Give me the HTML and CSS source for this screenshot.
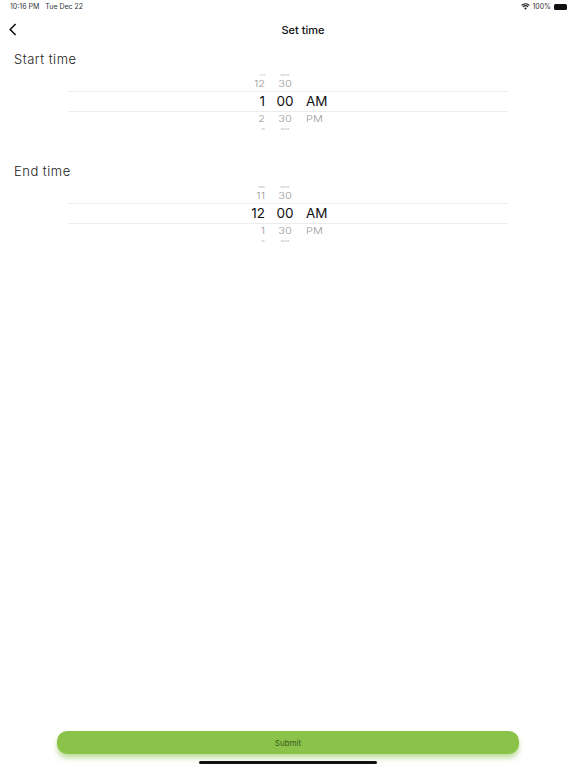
FILE: index.html
```html
<!DOCTYPE html>
<html lang="en">
<head>
<meta charset="utf-8">
<title>Set time</title>
<link rel="stylesheet" href="styles.css">
</head>
<body>
<div class="page">
  <div class="status">
    <div class="status-left"><span>10:16 PM</span><span>Tue Dec 22</span></div>
    <div class="status-right">
      <svg class="wifi" width="9" height="7" viewBox="0 0 10 8"><path d="M5 7.6 3.4 5.8a2.4 2.4 0 0 1 3.2 0zM2.5 4.9 1.6 3.9a5 5 0 0 1 6.8 0l-.9 1a3.7 3.7 0 0 0-5 0zM.9 3.2 0 2.2a7.4 7.4 0 0 1 10 0l-.9 1a6.1 6.1 0 0 0-8.2 0z" fill="#1a1a1a"/></svg>
      <span>100%</span>
      <span class="battery"></span>
    </div>
  </div>
  <header class="nav">
    <svg class="back" width="8" height="13" viewBox="0 0 8 13"><path d="M6.6 1 1.2 6.5l5.4 5.5" fill="none" stroke="#111" stroke-width="1.6"/></svg>
    <h1>Set time</h1>
  </header>
  <main class="content">
    <section class="block">
      <h2>Start time</h2>
      <div class="picker">
        <div class="row far top"><span>11</span><span>00</span><span></span></div>
        <div class="row near top"><span>12</span><span>30</span><span></span></div>
        <div class="row current"><span>1</span><span>00</span><span>AM</span></div>
        <div class="row near"><span>2</span><span>30</span><span>PM</span></div>
        <div class="row far"><span>3</span><span>00</span><span></span></div>
      </div>
    </section>
    <section class="block">
      <h2>End time</h2>
      <div class="picker">
        <div class="row far top"><span>10</span><span>00</span><span></span></div>
        <div class="row near top"><span>11</span><span>30</span><span></span></div>
        <div class="row current"><span>12</span><span>00</span><span>AM</span></div>
        <div class="row near"><span>1</span><span>30</span><span>PM</span></div>
        <div class="row far"><span>2</span><span>00</span><span></span></div>
      </div>
    </section>
  </main>
  <footer class="foot">
    <button class="submit" type="button">Submit</button>
    <div class="home"></div>
  </footer>
</div>
</body>
</html>
```
FILE: styles.css
```css
* { box-sizing: border-box; }
html, body { margin: 0; padding: 0; }
body {
  width: 576px;
  height: 768px;
  overflow: hidden;
  background: #fff;
  color: #111;
  font-family: Inter, "Liberation Sans", Arial, sans-serif;
}
.page {
  height: 768px;
  display: flex;
  flex-direction: column;
}
.status {
  height: 13px;
  padding: 0 9px 0 10px;
  display: flex;
  justify-content: space-between;
  align-items: center;
  font-size: 7px;
  color: #333;
}
.status-left { display: flex; gap: 6px; }
.status-right { display: flex; align-items: center; gap: 2px; }
.battery {
  width: 13px;
  height: 6px;
  margin-left: 1px;
  background: #111;
  border-radius: 1.5px;
}
.nav {
  height: 33px;
  padding-left: 30px;
  display: flex;
  align-items: center;
  justify-content: center;
  position: relative;
}
.back { position: absolute; left: 9px; top: 10px; }
.nav h1 {
  margin: 0;
  font-size: 11px;
  font-weight: 500;
  color: #111;
}
.content { flex: 1; }
.block { height: 112px; padding-top: 5px; }
.block h2 {
  margin: 0;
  padding-left: 14px;
  font-size: 13px;
  line-height: 16px;
  font-weight: 300;
  letter-spacing: 0.5px;
  color: #222;
  height: 21px;
}
.picker {
  margin: 0 68px;
  width: 440px;
}
.row {
  display: grid;
  grid-template-columns: 197px 40px 1fr;
  text-align: center;
}
.row span:nth-child(1) { text-align: right; }
.row span:nth-child(3) { text-align: left; padding-left: 1px; }
.row.far {
  height: 4px;
  font-size: 7px;
  line-height: 4px;
  color: #bbb;
}
.row.far.top { height: 6px; line-height: 6px; }
.row.far span { display: block; transform: scaleY(0.35); }
.row.near {
  height: 15px;
  font-size: 11px;
  line-height: 15px;
  font-weight: 300;
  color: #999;
}
.row.near.top { height: 13px; line-height: 13px; }
.row.near span { display: block; transform: scaleY(0.85); }
.row.current {
  height: 21px;
  font-size: 13.5px;
  line-height: 19px;
  color: #111;
  border-top: 1px solid #ececec;
  border-bottom: 1px solid #ececec;
}
.foot {
  height: 37px;
  padding: 0 57px;
  display: flex;
  flex-direction: column;
  align-items: center;
}
.submit {
  width: 462px;
  height: 23px;
  padding: 0;
  border: 0;
  border-radius: 10px;
  background: #8ac24a;
  color: #3d5a1e;
  font-family: inherit;
  font-size: 8px;
  box-shadow: 0 4px 5px rgba(138, 194, 74, 0.55);
}
.home {
  width: 178px;
  height: 3px;
  margin-top: 7px;
  background: #111;
  border-radius: 2px;
}
```
